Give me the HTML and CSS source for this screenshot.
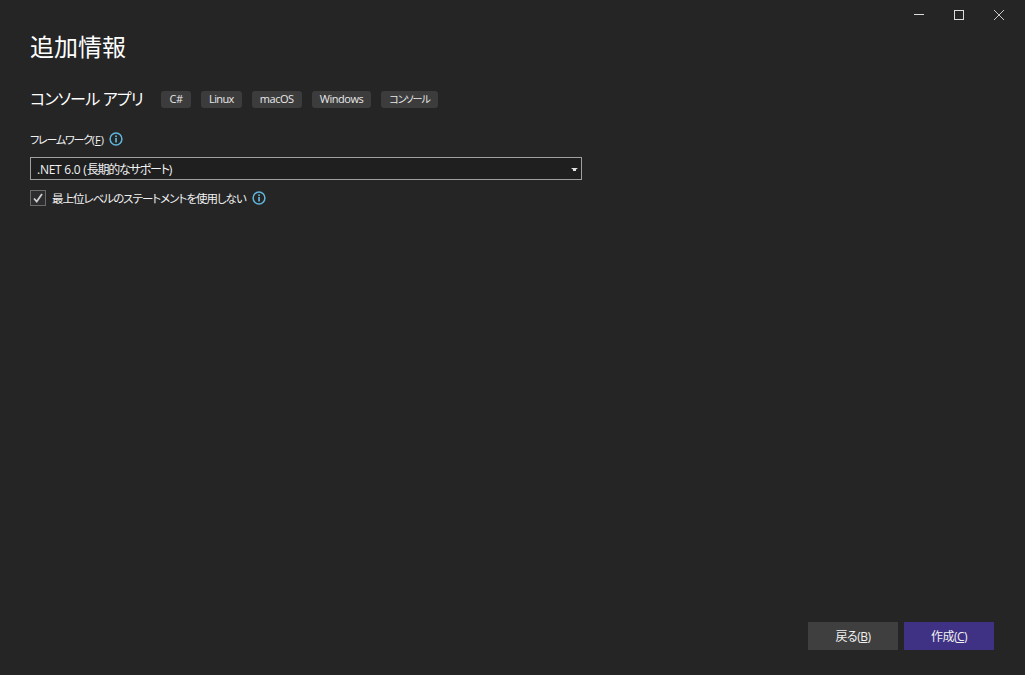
FILE: index.html
```html
<!DOCTYPE html>
<html lang="ja">
<head>
<meta charset="utf-8">
<title>追加情報</title>
<link rel="stylesheet" href="styles.css">
</head>
<body>
<div class="window">
  <div class="titlebar">
    <button class="winbtn" aria-label="最小化"><svg width="10" height="10" viewBox="0 0 10 10"><path d="M0 4.5H10" stroke="#dcdcdc" fill="none"/></svg></button>
    <button class="winbtn" aria-label="最大化"><svg width="10" height="10" viewBox="0 0 10 10"><rect x="0.5" y="0.5" width="9" height="9" stroke="#dcdcdc" fill="none"/></svg></button>
    <button class="winbtn" aria-label="閉じる"><svg width="10" height="10" viewBox="0 0 10 10"><path d="M0 0L10 10M10 0L0 10" stroke="#c8c8c8" fill="none"/></svg></button>
  </div>
  <main class="content">
    <h1 class="title">追加情報</h1>
    <div class="template-row">
      <h2 class="template-name">コンソール アプリ</h2>
      <ul class="tags">
        <li class="tag tag-short">C#</li>
        <li class="tag tag-linux">Linux</li>
        <li class="tag">macOS</li>
        <li class="tag">Windows</li>
        <li class="tag tag-kana">コンソール</li>
      </ul>
    </div>
    <div class="field-label">
      <span>フレームワーク<span class="latin">(<u>F</u>)</span></span>
      <svg class="info" width="14" height="14" viewBox="0 0 14 14"><circle cx="7" cy="7" r="5.9" stroke="#5fb6dd" stroke-width="1.5" fill="none"/><rect x="6.2" y="6" width="1.7" height="4.5" fill="#5fb6dd"/><rect x="6.2" y="3.4" width="1.7" height="1.7" fill="#5fb6dd"/></svg>
    </div>
    <div class="select">
      <span>.NET 6.0 (<span class="kana">長期的なサポート</span>)</span>
      <svg class="caret" width="7" height="3" viewBox="0 0 7 3"><path d="M0 0H7L5 1.500V3H2V1.500Z" fill="#e0e0e0"/></svg>
    </div>
    <label class="check-row">
      <span class="checkbox"><svg width="10" height="10" viewBox="0 0 10 10"><path d="M1 5.500L3.700 8.500L9 1" stroke="#cfcfcf" stroke-width="1.800" fill="none"/></svg></span>
      <span>最上位レベルのステートメントを使用しない</span>
      <svg class="info" width="14" height="14" viewBox="0 0 14 14"><circle cx="7" cy="7" r="5.9" stroke="#5fb6dd" stroke-width="1.5" fill="none"/><rect x="6.2" y="6" width="1.7" height="4.5" fill="#5fb6dd"/><rect x="6.2" y="3.4" width="1.7" height="1.7" fill="#5fb6dd"/></svg>
    </label>
  </main>
  <footer class="actions">
    <button class="btn">戻る(<u>B</u>)</button>
    <button class="btn primary">作成(<u>C</u>)</button>
  </footer>
</div>
</body>
</html>
```
FILE: styles.css
```css
* { box-sizing: border-box; }
html, body { margin: 0; height: 100%; }
body {
  background: #252526;
  color: #f1f1f1;
  font-family: "Open Sans", "Noto Sans CJK JP", sans-serif;
  font-size: 12px;
  font-feature-settings: "palt";
  overflow: hidden;
}
.window { height: 675px; display: flex; flex-direction: column; }
.titlebar { height: 30px; display: flex; justify-content: flex-end; padding-right: 6px; flex: none; }
.winbtn { width: 40px; height: 30px; padding: 0; border: 0; background: none; display: flex; align-items: center; justify-content: center; }
.content { flex: 1; padding: 0 30px; }
.title { margin: 0; height: 34px; font-size: 24px; font-weight: 400; line-height: 34px; color: #fff; }
.template-row { display: flex; align-items: center; margin-top: 21px; height: 28px; }
.template-name { margin: 0; font-size: 16px; font-weight: 400; line-height: 28px; color: #fff; width: 131px; flex: none; white-space: nowrap; letter-spacing: -0.8px; }
.tags { list-style: none; display: flex; gap: 10px; margin: 0; padding: 0; }
.tag { height: 17px; line-height: 16px; padding: 0 8px; background: #3c3c3c; border-radius: 3px; font-size: 11px; color: #e8e8e8; letter-spacing: -0.45px; }
.tag-short { width: 30px; padding: 0; text-align: center; }
.tag-linux { letter-spacing: -0.6px; }
.tag-kana { font-size: 10px; letter-spacing: -1.1px; }
.field-label { display: flex; align-items: center; gap: 5px; margin-top: 17px; height: 18px; font-size: 11px; color: #f1f1f1; letter-spacing: -1.2px; }
.latin { letter-spacing: 0; }
.select { width: 552px; height: 23px; margin-top: 9px; border: 1px solid #a0a0a0; background: #1f1f20; display: flex; align-items: center; justify-content: space-between; padding: 0 3px 0 6px; font-size: 12px; letter-spacing: -0.25px; }
.kana { letter-spacing: -1.2px; }
.caret { flex: none; margin-top: 2px; }
.check-row { display: flex; align-items: center; margin-top: 9px; height: 18px; font-size: 11.5px; letter-spacing: -1px; }
.checkbox { width: 16px; height: 16px; border: 1px solid #6b6b6b; background: #2d2d30; display: flex; align-items: center; justify-content: center; margin-right: 6px; flex: none; }
.check-row .info { margin-left: 6px; }
.actions { display: flex; justify-content: flex-end; gap: 6px; padding: 0 31px 25px 0; flex: none; }
.btn { width: 90px; height: 28px; padding: 0; border: 0; background: #3f3f3f; color: #f1f1f1; font: inherit; font-size: 12px; letter-spacing: -0.5px; }
.btn.primary { background: #3f3183; }
```
